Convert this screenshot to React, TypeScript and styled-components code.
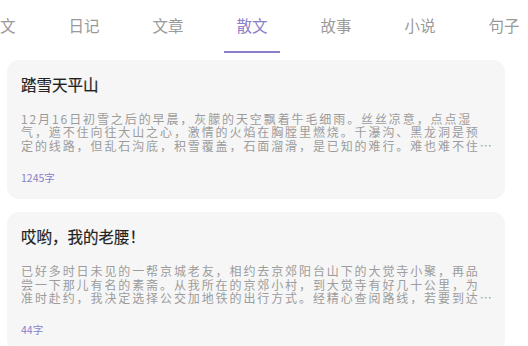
import React from "react";
import styled, { createGlobalStyle } from "styled-components";

const GlobalStyle = createGlobalStyle`
  html, body {
    margin: 0;
    padding: 0;
    background: #ffffff;
    font-family: "Noto Sans CJK SC", "Noto Sans", sans-serif;
  }
`;

const Page = styled.div`
  width: 528px;
  height: 346px;
  overflow: hidden;
  background: #ffffff;
`;

const TabBar = styled.nav`
  height: 54px;
  overflow: hidden;
  display: flex;
  margin-left: -42px;
`;

const Tab = styled.div<{ $active?: boolean }>`
  flex: 0 0 84px;
  height: 54px;
  display: flex;
  align-items: center;
  justify-content: center;
  position: relative;
  font-size: 15.5px;
  color: ${(p) => (p.$active ? "#8a80c9" : "#9a9a9a")};
  padding-bottom: 4px;
  box-sizing: border-box;

  &::after {
    content: "";
    display: ${(p) => (p.$active ? "block" : "none")};
    position: absolute;
    left: 14px;
    right: 14px;
    bottom: 1px;
    height: 2.5px;
    background: #8a80c9;
  }
`;

const List = styled.div`
  padding: 6px 0 0 7px;
  display: flex;
  flex-direction: column;
  gap: 13px;
`;

const Card = styled.article`
  width: 498px;
  box-sizing: border-box;
  background: #f6f6f6;
  border-radius: 12px;
  padding: 14px;
`;

const Title = styled.h3`
  margin: 0;
  font-size: 15.5px;
  line-height: 20px;
  font-weight: 400;
  -webkit-text-stroke: 0.2px #222222;
  color: #222222;
`;

const Excerpt = styled.p`
  margin: 18px 0 0;
  font-size: 12px;
  letter-spacing: 1.9px;
  line-height: 13.4px;
  line-break: strict;
  color: #9c9c9c;
  display: -webkit-box;
  -webkit-line-clamp: 3;
  -webkit-box-orient: vertical;
  overflow: hidden;
  width: 472px;
`;

const Count = styled.div`
  margin-top: 19px;
  font-size: 10.5px;
  line-height: 14px;
  color: #8a80c9;
`;

const tabs = ["美文", "日记", "文章", "散文", "故事", "小说", "句子"];

const posts = [
  {
    title: "踏雪天平山",
    text: "12月16日初雪之后的早晨，灰朦的天空飘着牛毛细雨。丝丝凉意，点点湿气，遮不住向往大山之心，激情的火焰在胸膛里燃烧。千瀑沟、黑龙洞是预定的线路，但乱石沟底，积雪覆盖，石面溜滑，是已知的难行。难也难不住我们的脚步，一行人踏着积雪向山里进发。",
    count: "1245字",
  },
  {
    title: "哎哟，我的老腰！",
    text: "已好多时日未见的一帮京城老友，相约去京郊阳台山下的大觉寺小聚，再品尝一下那儿有名的素斋。从我所在的京郊小村，到大觉寺有好几十公里，为准时赴约，我决定选择公交加地铁的出行方式。经精心查阅路线，若要到达大觉寺，需要倒好几趟车。",
    count: "44字",
  },
];

export default function App() {
  return (
    <Page lang="zh-CN">
      <GlobalStyle />
      <TabBar>
        {tabs.map((t) => (
          <Tab key={t} $active={t === "散文"}>
            {t}
          </Tab>
        ))}
      </TabBar>
      <List>
        {posts.map((p) => (
          <Card key={p.title}>
            <Title>{p.title}</Title>
            <Excerpt>{p.text}</Excerpt>
            <Count>{p.count}</Count>
          </Card>
        ))}
      </List>
    </Page>
  );
}
